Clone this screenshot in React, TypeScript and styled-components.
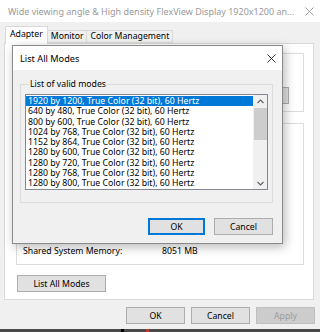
import React from "react";
import styled, { createGlobalStyle } from "styled-components";

const Global = createGlobalStyle`
  html, body { margin: 0; padding: 0; background: #f0f0f0; }
  body { font-family: "Noto Sans", "Open Sans", sans-serif; color: #000; }
  * { box-sizing: border-box; }
`;

const Window = styled.div`
  position: relative;
  width: 320px;
  height: 332px;
  display: flex;
  flex-direction: column;
  background: #f0f0f0;
  overflow: hidden;
`;

const TitleBar = styled.div`
  height: 22px;
  flex: none;
  background: #ffffff;
  display: flex;
  align-items: center;
  justify-content: space-between;
  padding: 0 6px 0 8px;
  font-size: 9px;
  color: #9a9a9a;
  white-space: nowrap;
`;

const Body = styled.div`
  flex: none;
  display: flex;
  flex-direction: column;
  padding: 4px 6px 0 4px;
`;

const TabStrip = styled.div`
  height: 17px;
  display: flex;
  align-items: flex-end;
  padding-left: 1px;
`;

const Tab = styled.div<{ $active?: boolean }>`
  height: ${(p) => (p.$active ? "18px" : "13px")};
  margin-bottom: ${(p) => (p.$active ? "-1px" : "0")};
  padding: 0 ${(p) => (p.$active ? "4px" : "3px")};
  background: ${(p) => (p.$active ? "#ffffff" : "#f0f0f0")};
  border: 1px solid #d9d9d9;
  border-bottom: ${(p) => (p.$active ? "none" : "1px solid #d9d9d9")};
  border-left: ${(p) => (p.$active ? "1px solid #d9d9d9" : "none")};
  font-size: 8.7px;
  line-height: ${(p) => (p.$active ? "14px" : "11px")};
  position: relative;
  z-index: ${(p) => (p.$active ? 1 : 0)};
  white-space: nowrap;
`;

const TabPanel = styled.div`
  height: 257px;
  width: 310px;
  background: #ffffff;
  border: 1px solid #d9d9d9;
  display: flex;
  flex-direction: column;
  padding: 9px 9px 0 11px;
`;

const GroupBox = styled.div<{ $h: number }>`
  height: ${(p) => p.$h}px;
  border: 1px solid #dcdcdc;
  display: flex;
  flex-direction: column;
  justify-content: flex-end;
  padding: 0 14px 7px 6px;
  & + & { margin-top: 11px; }
`;

const RowEnd = styled.div`
  display: flex;
  justify-content: flex-end;
`;

const InfoRow = styled.div`
  display: flex;
  font-size: 8.7px;
  line-height: 12px;
`;

const InfoLabel = styled.span`
  width: 139px;
`;

const Button = styled.div<{ $w: number; $focus?: boolean; $disabled?: boolean }>`
  width: ${(p) => p.$w}px;
  height: 17px;
  flex: none;
  display: flex;
  align-items: center;
  justify-content: center;
  font-size: 8.7px;
  background: ${(p) => (p.$disabled ? "#cccccc" : "#e1e1e1")};
  border: 1px solid ${(p) => (p.$focus ? "#0078d7" : p.$disabled ? "#bfbfbf" : "#adadad")};
  box-shadow: ${(p) => (p.$focus ? "inset 0 0 0 1px #0078d7" : "none")};
  color: ${(p) => (p.$disabled ? "#9d9d9d" : "#000")};
`;

const ListAllButton = styled(Button)`
  margin: 10px 0 0 1px;
`;

const Footer = styled.div`
  display: flex;
  justify-content: flex-end;
  gap: 6px;
  margin-top: 7px;
  margin-right: -1px;
`;

const Taskbar = styled.div`
  margin-top: auto;
  height: 3px;
  background: #4a4a4a;
  position: relative;
`;

const TaskMark = styled.span<{ $x: number; $c: string }>`
  position: absolute;
  left: ${(p) => p.$x}px;
  top: 0;
  width: 3px;
  height: 3px;
  background: ${(p) => p.$c};
`;

const Dialog = styled.div`
  position: absolute;
  left: 12px;
  top: 45px;
  width: 271px;
  height: 199px;
  border: 1px solid #8a8a8a;
  background: #f0f0f0;
  box-shadow: 2px 3px 10px rgba(0, 0, 0, 0.28);
  display: flex;
  flex-direction: column;
  z-index: 5;
`;

const DialogTitle = styled.div`
  height: 24px;
  flex: none;
  background: #ffffff;
  display: flex;
  align-items: center;
  justify-content: space-between;
  padding: 0 6px 0 7px;
  font-size: 9.2px;
`;

const DialogBody = styled.div`
  flex: 1;
  display: flex;
  flex-direction: column;
  padding: 8px 9px 0 7px;
`;

const Fieldset = styled.fieldset`
  margin: 0;
  border: 1px solid #dcdcdc;
  padding: 4px 4px 12px 4px;
  min-width: 0;
`;

const Legend = styled.legend`
  font-size: 8.7px;
  line-height: 12px;
  padding: 0 1px;
  margin-left: 4px;
`;

const ListBox = styled.div`
  height: 96px;
  border: 1px solid #828790;
  background: #ffffff;
  display: flex;
  padding: 1px 0 0 0;
`;

const Items = styled.div`
  flex: 1;
  overflow: hidden;
`;

const Item = styled.div<{ $sel?: boolean }>`
  height: 10.3px;
  line-height: 10.3px;
  font-size: 8.75px;
  padding-left: 2px;
  white-space: nowrap;
  background: ${(p) => (p.$sel ? "#0078d7" : "transparent")};
  color: ${(p) => (p.$sel ? "#ffffff" : "#000000")};
`;

const ScrollBar = styled.div`
  width: 14px;
  flex: none;
  background: #f0f0f0;
  display: flex;
  flex-direction: column;
  align-items: center;
  margin: -1px 0 0;
`;

const ScrollArrow = styled.div`
  height: 12px;
  width: 100%;
  display: flex;
  align-items: center;
  justify-content: center;
`;

const Thumb = styled.div`
  width: 13px;
  height: 32px;
  background: #cdcdcd;
  margin-top: 1px;
`;

const Spacer = styled.div`
  flex: 1;
`;

const DialogButtons = styled.div`
  display: flex;
  justify-content: flex-end;
  gap: 9px;
  margin-top: 15px;
`;

const Close = ({ size = 9, color = "#000" }: { size?: number; color?: string }) => (
  <svg width={size} height={size} viewBox="0 0 10 10">
    <path d="M0.5 0.5 L9.5 9.5 M9.5 0.5 L0.5 9.5" stroke={color} strokeWidth="0.9" fill="none" />
  </svg>
);

const Chevron = ({ up }: { up?: boolean }) => (
  <svg width="7" height="5" viewBox="0 0 7 5">
    <path d={up ? "M0.5 4 L3.5 1 L6.5 4" : "M0.5 1 L3.5 4 L6.5 1"} stroke="#606060" strokeWidth="1.1" fill="none" />
  </svg>
);

const modes = [
  "1920 by 1200, True Color (32 bit), 60 Hertz",
  "640 by 480, True Color (32 bit), 60 Hertz",
  "800 by 600, True Color (32 bit), 60 Hertz",
  "1024 by 768, True Color (32 bit), 60 Hertz",
  "1152 by 864, True Color (32 bit), 60 Hertz",
  "1280 by 600, True Color (32 bit), 60 Hertz",
  "1280 by 720, True Color (32 bit), 60 Hertz",
  "1280 by 768, True Color (32 bit), 60 Hertz",
  "1280 by 800, True Color (32 bit), 60 Hertz",
];

export default function App() {
  return (
    <>
      <Global />
      <Window>
        <TitleBar>
          <span>Wide viewing angle &amp; High density FlexView Display 1920x1200 an...</span>
          <Close size={9} color="#8a8a8a" />
        </TitleBar>
        <Body>
          <TabStrip>
            <Tab $active>Adapter</Tab>
            <Tab>Monitor</Tab>
            <Tab>Color Management</Tab>
          </TabStrip>
          <TabPanel>
            <GroupBox $h={59}>
              <RowEnd>
                <Button $w={58}>Properties</Button>
              </RowEnd>
            </GroupBox>
            <GroupBox $h={142}>
              <InfoRow>
                <InfoLabel>Shared System Memory:</InfoLabel>
                <span>8051 MB</span>
              </InfoRow>
            </GroupBox>
            <ListAllButton $w={89}>List All Modes</ListAllButton>
          </TabPanel>
          <Footer>
            <Button $w={59}>OK</Button>
            <Button $w={59}>Cancel</Button>
            <Button $w={59} $disabled>Apply</Button>
          </Footer>
        </Body>
        <Taskbar>
          <TaskMark $x={121} $c="#000" />
          <TaskMark $x={146} $c="#c0392b" />
        </Taskbar>
        <Dialog>
          <DialogTitle>
            <span>List All Modes</span>
            <Close size={9} />
          </DialogTitle>
          <DialogBody>
            <Fieldset>
              <Legend>List of valid modes</Legend>
              <ListBox>
                <Items>
                  {modes.map((m, i) => (
                    <Item key={m} $sel={i === 0}>{m}</Item>
                  ))}
                </Items>
                <ScrollBar>
                  <ScrollArrow><Chevron up /></ScrollArrow>
                  <Thumb />
                  <Spacer />
                  <ScrollArrow><Chevron /></ScrollArrow>
                </ScrollBar>
              </ListBox>
            </Fieldset>
            <DialogButtons>
              <Button $w={57} $focus>OK</Button>
              <Button $w={59}>Cancel</Button>
            </DialogButtons>
          </DialogBody>
        </Dialog>
      </Window>
    </>
  );
}
